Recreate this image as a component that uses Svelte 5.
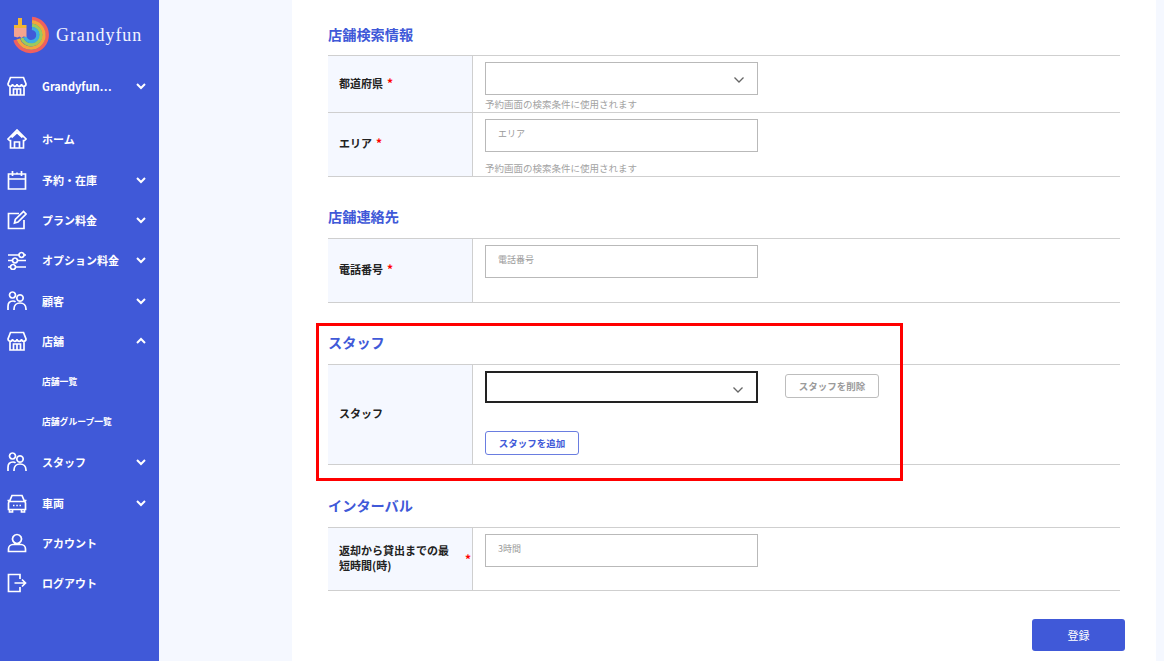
<script>
  const icons = {
    shop: 'M3.500 1.500h13L19 8c0 1.500-1.200 2.300-2.300 2.300S14.500 9.500 14.500 8c0 1.500-1.200 2.300-2.300 2.300S10 9.500 10 8c0 1.500-1 2.300-2.200 2.300S5.500 9.500 5.500 8c0 1.500-1 2.300-2.200 2.300S1 9.500 1 8zM3 10.500V19h14v-8.500M6.500 19v-6h7v6M10 13v6',
    home: 'M1 10 10 1l9 9-1.500 1.500h-1V19h-13v-7.500h-1zM7.500 19v-6h5v6M4.500 8.500 10 3.500l5.500 5',
    cal: 'M1.500 4h17v15h-17zM1.500 9h17M5.500 1v5M10 2.500v1M14.500 1v5',
    edit: 'M17 10v8.500H1.500V3.500H12M7.500 13l.8-3.500L16.500 1.500 19 4l-8 8z',
    sliders: 'M1 5h11M17 5h2M1 10.500h4M11 10.500h8M1 17h2M9 17h10M14.500 2.500a2.500 2.500 0 1 0 .01 0M8 8a2.500 2.500 0 1 0 .01 0M6 14.500a2.500 2.500 0 1 0 .01 0',
    people: 'M5.500 1a3 3 0 1 0 .01 0M13 3.800a3.200 3.200 0 1 0 .01 0M1 19v-3.500c0-3.500 2-5.500 5-5.500 1 0 2 .3 2.500.8M7 19v-1c0-3.500 2.500-6 6-6s6 2.500 6 6v1',
    car: 'M5 2.500h10l2.500 6h-15zM1.500 10c0-1 .8-1.500 1.500-1.500h14c.7 0 1.500.5 1.500 1.500v6.500h-17zM2.500 16.500V19h3v-2.500M14.500 16.500V19h3v-2.500M6 12.500h1.500M9.300 12.500h1.500M12.500 12.500H14M.5 7.500h2M17.500 7.500h2',
    user: 'M10 1.500a4.500 4.500 0 1 0 .01 0M1.500 18.500V16c0-2.500 2-4.500 4.500-4.500h8c2.500 0 4.500 2 4.500 4.500v2.500z',
    logout: 'M13 6V1.500H1.500v17H13V14M7.500 10h11M15 6.500l3.500 3.500-3.500 3.500',
  };
  const nav = [
    { t: 'ホーム', i: 'home' },
    { t: '予約・在庫', i: 'cal', c: 'down' },
    { t: 'プラン料金', i: 'edit', c: 'down' },
    { t: 'オプション料金', i: 'sliders', c: 'down' },
    { t: '顧客', i: 'people', c: 'down' },
    { t: '店舗', i: 'shop', c: 'up' },
    { t: '店舗一覧', sub: true },
    { t: '店舗グループ一覧', sub: true },
    { t: 'スタッフ', i: 'people', c: 'down' },
    { t: '車両', i: 'car', c: 'down' },
    { t: 'アカウント', i: 'user' },
    { t: 'ログアウト', i: 'logout' },
  ];
</script>

{#snippet icon(name)}
  <svg class="icon" viewBox="0 0 20 20" aria-hidden="true"><path d={icons[name]} /></svg>
{/snippet}

{#snippet chev(dir)}
  <svg class="chev" viewBox="0 0 12 8" aria-hidden="true"><path d={dir === 'up' ? 'M2 6l4-4 4 4' : 'M2 2l4 4 4-4'} /></svg>
{/snippet}

{#snippet selectArrow()}
  <svg class="sel-arrow" viewBox="0 0 12 8" aria-hidden="true"><path d="M1.500 1.500 6 6l4.500-4.500" /></svg>
{/snippet}

<div class="page">
  <aside class="side">
    <div class="logo">
      <svg class="logo-mark" viewBox="0 0 37 38" aria-hidden="true">
        <g fill="none" stroke-width="3.400">
          <path d="M20 2.500A16.500 16.500 0 1 1 3 24" stroke="#f0605e" />
          <path d="M20 5.800A13.200 13.200 0 1 1 6.200 23" stroke="#f3a53c" />
          <path d="M20 9.200A9.800 9.800 0 1 1 9.800 22" stroke="#9cca5a" />
          <path d="M20 12.400A6.600 6.600 0 1 1 13 21" stroke="#3eaee0" />
        </g>
        <rect x="6" y="2" width="4" height="7" fill="#f2b632" />
        <rect x="2" y="9" width="12.500" height="3" fill="#f2b632" />
        <path d="M2 12h12.500v9l-3-.5-2 1.500-2-1.500-2 1-3.500-1z" fill="#f4a48e" />
      </svg>
      <span class="logo-text">Grandyfun</span>
    </div>

    <div class="item shop-item">
      {@render icon('shop')}
      <span class="label">Grandyfun⋯</span>
      {@render chev('down')}
    </div>

    <nav class="nav">
      {#each nav as n}
        <div class="item" class:sub={n.sub}>
          {#if n.i}{@render icon(n.i)}{/if}
          <span class="label">{n.t}</span>
          {#if n.c}{@render chev(n.c)}{/if}
        </div>
      {/each}
    </nav>
  </aside>

  <div class="gutter"></div>

  <main class="main">
    <section class="sec first">
      <h2>店舗検索情報</h2>
      <div class="table">
        <div class="row r57">
          <div class="th"><span>都道府県</span><i class="req">*</i></div>
          <div class="td">
            <div class="field select">{@render selectArrow()}</div>
            <p class="hint tight">予約画面の検索条件に使用されます</p>
          </div>
        </div>
        <div class="row r64">
          <div class="th"><span>エリア</span><i class="req">*</i></div>
          <div class="td">
            <div class="field"><span class="ph">エリア</span></div>
            <p class="hint">予約画面の検索条件に使用されます</p>
          </div>
        </div>
      </div>
    </section>

    <section class="sec">
      <h2>店舗連絡先</h2>
      <div class="table">
        <div class="row r64">
          <div class="th"><span>電話番号</span><i class="req">*</i></div>
          <div class="td"><div class="field"><span class="ph">電話番号</span></div></div>
        </div>
      </div>
    </section>

    <section class="sec">
      <h2>スタッフ</h2>
      <div class="table">
        <div class="row r100">
          <div class="th"><span>スタッフ</span></div>
          <div class="td">
            <div class="staff-line">
              <div class="field select focus">{@render selectArrow()}</div>
              <button class="btn ghost" type="button">スタッフを削除</button>
            </div>
            <button class="btn add" type="button">スタッフを追加</button>
          </div>
        </div>
      </div>
    </section>

    <section class="sec last">
      <h2>インターバル</h2>
      <div class="table">
        <div class="row r63">
          <div class="th long"><span>返却から貸出までの最短時間(時)</span><i class="req">*</i></div>
          <div class="td"><div class="field"><span class="ph">3時間</span></div></div>
        </div>
      </div>
    </section>

    <div class="actions"><button class="submit" type="button">登録</button></div>

    <div class="highlight"></div>
  </main>

  <div class="gutter-r"></div>
</div>

<style>
  :global(body) { margin: 0; background: #f5f8ff; }
  .page {
    display: flex;
    width: 1164px;
    height: 661px;
    overflow: hidden;
    font-family: "Noto Sans CJK JP", "Noto Sans", sans-serif;
    color: #222;
  }
  .side {
    width: 159px;
    flex: none;
    background: #4059d8;
    color: #fff;
  }
  .logo {
    display: flex;
    align-items: center;
    height: 70px;
    padding-left: 12px;
    box-sizing: border-box;
  }
  .logo-mark { width: 37px; height: 38px; flex: none; }
  .logo-text {
    margin-left: 7px;
    font-family: "Liberation Serif", serif;
    font-size: 18px;
    letter-spacing: 0.900px;
    color: #f4f5ff;
  }
  .item {
    display: flex;
    align-items: center;
    height: 40.400px;
    padding-left: 7px;
    font-size: 11px;
    font-weight: 700;
  }
  .shop-item { height: 32px; margin-bottom: 17px; }
  .icon {
    width: 20px;
    height: 20px;
    flex: none;
    fill: none;
    stroke: #fff;
    stroke-width: 1.700;
  }
  .label { margin-left: 15px; flex: 1; white-space: nowrap; }
  .sub { font-size: 8.800px; padding-left: 42px; }
  .sub .label { margin-left: 0; }
  .chev {
    width: 12px;
    height: 8px;
    flex: none;
    margin-right: 12px;
    fill: none;
    stroke: #fff;
    stroke-width: 2;
  }
  .gutter { width: 133px; flex: none; }
  .gutter-r { width: 8px; flex: none; }
  .main {
    position: relative;
    width: 864px;
    flex: none;
    background: #fff;
    padding: 0 36px;
    box-sizing: border-box;
  }
  .sec { margin-bottom: -1px; }
  .sec h2 {
    margin: 0;
    height: 62px;
    padding-top: 30px;
    box-sizing: border-box;
    font-size: 14.200px;
    line-height: 20px;
    font-weight: 700;
    color: #4059d8;
  }
  .sec.first h2 { height: 55px; padding-top: 24px; }
  .sec.last h2 { height: 63px; padding-top: 31px; }
  .table { border-top: 1px solid #cfcfcf; }
  .row {
    display: flex;
    border-bottom: 1px solid #cfcfcf;
    box-sizing: border-box;
  }
  .r57 { height: 57px; }
  .r63 { height: 63px; }
  .r64 { height: 64px; }
  .r100 { height: 100px; }
  .th {
    width: 145px;
    flex: none;
    box-sizing: border-box;
    background: #f5f8ff;
    border-right: 1px solid #cfcfcf;
    padding: 0 0 3px 11px;
    display: flex;
    align-items: center;
    font-size: 11px;
    font-weight: 700;
    line-height: 16px;
  }
  .th.long { line-height: 15px; padding-bottom: 2px; }
  .th.long span { width: 118px; flex: none; }
  .req {
    color: #f00;
    font-style: normal;
    margin-left: 4px;
    font-size: 12px;
  }
  .long .req { margin-left: 8px; }
  .td { flex: 1; padding: 6px 0 0 12px; }
  .field {
    position: relative;
    width: 273px;
    height: 33px;
    box-sizing: border-box;
    border: 1px solid #b9b9b9;
    background: #fff;
    display: flex;
    align-items: flex-start;
    padding: 6px 12px;
  }
  .focus { border: 2px solid #222; height: 32px; }
  .ph { font-size: 9px; line-height: 15px; color: #9a9a9a; }
  .sel-arrow {
    position: absolute;
    right: 12px;
    top: 13px;
    width: 12px;
    height: 8px;
    fill: none;
    stroke: #666;
    stroke-width: 1.300;
  }
  .hint {
    margin: 10px 0 0;
    font-size: 9.500px;
    line-height: 13px;
    color: #a3a3a3;
  }
  .hint.tight { margin-top: 3px; }
  .staff-line { display: flex; align-items: flex-start; gap: 27px; }
  .btn {
    display: block;
    width: 94px;
    height: 24px;
    padding: 0;
    border-radius: 3px;
    background: #fff;
    font-family: inherit;
    font-size: 9.500px;
    font-weight: 700;
    line-height: 22px;
  }
  .ghost { margin-top: 3px; border: 1px solid #bdbdbd; color: #9b9b9b; }
  .add { margin-top: 28px; border: 1px solid #6a7de0; color: #4059d8; }
  .actions {
    display: flex;
    justify-content: flex-end;
    padding: 29px 0 0;
    margin-right: -5px;
  }
  .submit {
    width: 93px;
    height: 32px;
    border: 0;
    border-radius: 3px;
    background: #4059d8;
    color: #fff;
    font-family: inherit;
    font-size: 11px;
  }
  .highlight {
    position: absolute;
    left: 24px;
    top: 323px;
    width: 587px;
    height: 158px;
    box-sizing: border-box;
    border: 3px solid #f00;
    pointer-events: none;
  }
</style>
